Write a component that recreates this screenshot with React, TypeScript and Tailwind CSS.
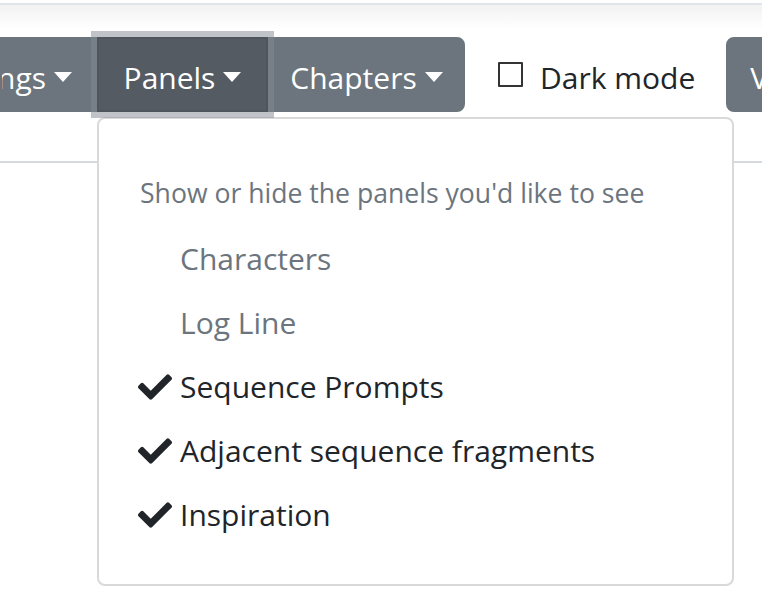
import React from "react";

const font = { fontFamily: '"Open Sans", "Noto Sans", sans-serif' };

function Caret() {
  return (
    <span className="ml-[8px] inline-block w-0 h-0 border-t-[10px] border-t-white border-x-[9px] border-x-transparent -translate-y-[1px]" />
  );
}

function Check() {
  return (
    <svg width="34" height="34" viewBox="0 0 512 512" className="text-[#212529]">
      <path
        fill="currentColor"
        d="M173.898 439.404l-166.4-166.4c-9.997-9.997-9.997-26.206 0-36.204l36.203-36.204c9.997-9.998 26.207-9.998 36.204 0L192 312.69 432.095 72.596c9.997-9.997 26.207-9.997 36.204 0l36.203 36.204c9.997 9.997 9.997 26.206 0 36.204l-294.4 294.401c-9.998 9.997-26.207 9.997-36.204-.001z"
      />
    </svg>
  );
}

const items = [
  { label: "Characters", checked: false },
  { label: "Log Line", checked: false },
  { label: "Sequence Prompts", checked: true },
  { label: "Adjacent sequence fragments", checked: true },
  { label: "Inspiration", checked: true },
];

export default function App() {
  return (
    <div className="relative w-[762px] h-[614px] overflow-hidden bg-white" style={font}>
      <div className="h-[3px]" />
      <div className="h-[2px] bg-[#e1e4e8]" />
      <div className="h-[25px] bg-gradient-to-b from-[#f2f2f2] to-white" />
      <div className="h-[7px]" />
      <div className="flex items-center h-[75px] whitespace-nowrap text-[30px] leading-[48px]">
        <div className="flex">
          <div className="w-[98px] h-[75px] flex items-center justify-end pr-[24px] pt-[6px] bg-[#6c757d] text-white border-2 border-[#6c757d] overflow-hidden">
            <span>Settings</span>
            <Caret />
          </div>
          <div className="relative z-10 -ml-[1px] w-[171px] h-[75px] flex items-center justify-center pt-[6px] bg-[#545b62] text-white border-2 border-[#4e555b] shadow-[0_0_0_6px_rgba(130,138,145,0.5)]">
            <span>Panels</span>
            <Caret />
          </div>
          <div className="w-[197px] h-[75px] flex items-center justify-center pt-[6px] bg-[#6c757d] text-white border-2 border-[#6c757d] rounded-r-[8px]">
            <span>Chapters</span>
            <Caret />
          </div>
        </div>
        <div className="ml-[33px] flex items-center">
          <span className="w-[25px] h-[25px] border-[2.5px] border-[#333] rounded-[1px] bg-white" />
          <span className="ml-[17px] pt-[6px] text-[#212529]">Dark mode</span>
        </div>
        <div className="ml-[31px] h-[75px] pl-[22px] pr-[24px] pt-[6px] flex items-center bg-[#6c757d] text-white rounded-l-[8px] border-2 border-[#6c757d]">
          View
        </div>
      </div>
      <div className="h-[49px]" />
      <div className="h-[2px] bg-[#d5d9de]" />

      <div className="absolute top-[117px] left-[97px] w-[637px] h-[469px] bg-white border-2 border-[#d9d9d9] rounded-[8px]">
        <div className="pt-[53px] pl-[41px] text-[26.6px] leading-[42px] text-[#6c757d] whitespace-nowrap">
          Show or hide the panels you'd like to see
        </div>
        <div className="mt-[13px]">
          {items.map((it) => (
            <div key={it.label} className="h-[64px] flex items-center pl-[39px] whitespace-nowrap">
              <span className="w-[42px] flex items-center">{it.checked ? <Check /> : null}</span>
              <span className={"text-[30px] leading-[48px] " + (it.checked ? "text-[#212529]" : "text-[#6c757d]")}>
                {it.label}
              </span>
            </div>
          ))}
        </div>
      </div>
    </div>
  );
}
